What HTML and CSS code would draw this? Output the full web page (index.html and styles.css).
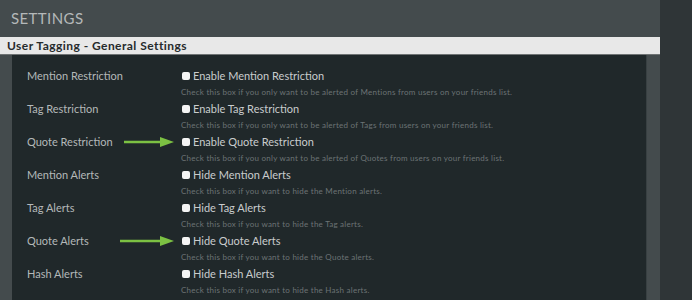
FILE: index.html
```html
<!DOCTYPE html>
<html lang="en">
<head>
    <meta charset="UTF-8">
    <title>Settings - User Tagging</title>
    <link rel="stylesheet" href="styles.css">
</head>
<body>
    <div class="panel">
        <header class="panel-header">
            <h1>Settings</h1>
        </header>

        <h2 class="section-title">User Tagging - General Settings</h2>

        <div class="section-body">
            <div class="setting-row">
                <div class="setting-label">Mention Restriction</div>
                <div class="setting-field">
                    <label class="check"><span class="box"></span>Enable Mention Restriction</label>
                    <p class="hint">Check this box if you only want to be alerted of Mentions from users on your friends list.</p>
                </div>
            </div>

            <div class="setting-row">
                <div class="setting-label">Tag Restriction</div>
                <div class="setting-field">
                    <label class="check"><span class="box"></span>Enable Tag Restriction</label>
                    <p class="hint">Check this box if you only want to be alerted of Tags from users on your friends list.</p>
                </div>
            </div>

            <div class="setting-row">
                <div class="setting-label">
                    Quote Restriction
                    <svg class="arrow" width="50" height="10" viewBox="0 0 50 10">
                        <line x1="0" y1="5" x2="40" y2="5" stroke="#7cc143" stroke-width="2.4" stroke-linecap="round"/>
                        <polygon points="36,0 50,5 36,10" fill="#7cc143"/>
                    </svg>
                </div>
                <div class="setting-field">
                    <label class="check"><span class="box"></span>Enable Quote Restriction</label>
                    <p class="hint">Check this box if you only want to be alerted of Quotes from users on your friends list.</p>
                </div>
            </div>

            <div class="setting-row">
                <div class="setting-label">Mention Alerts</div>
                <div class="setting-field">
                    <label class="check"><span class="box"></span>Hide Mention Alerts</label>
                    <p class="hint">Check this box if you want to hide the Mention alerts.</p>
                </div>
            </div>

            <div class="setting-row">
                <div class="setting-label">Tag Alerts</div>
                <div class="setting-field">
                    <label class="check"><span class="box"></span>Hide Tag Alerts</label>
                    <p class="hint">Check this box if you want to hide the Tag alerts.</p>
                </div>
            </div>

            <div class="setting-row">
                <div class="setting-label">
                    Quote Alerts
                    <svg class="arrow" width="54" height="10" viewBox="0 0 54 10">
                        <line x1="0" y1="5" x2="44" y2="5" stroke="#7cc143" stroke-width="2.4" stroke-linecap="round"/>
                        <polygon points="40,0 54,5 40,10" fill="#7cc143"/>
                    </svg>
                </div>
                <div class="setting-field">
                    <label class="check"><span class="box"></span>Hide Quote Alerts</label>
                    <p class="hint">Check this box if you want to hide the Quote alerts.</p>
                </div>
            </div>

            <div class="setting-row">
                <div class="setting-label">Hash Alerts</div>
                <div class="setting-field">
                    <label class="check"><span class="box"></span>Hide Hash Alerts</label>
                    <p class="hint">Check this box if you want to hide the Hash alerts.</p>
                </div>
            </div>
        </div>
    </div>
</body>
</html>
```

FILE: styles.css
```css
:root {
    --outer: #2f3537;
    --panel: #444b4d;
    --dark: #20282a;
    --bar: #e8e8e8;
    --label: #b4b8b9;
    --text: #c9cccd;
    --hint: #6c7375;
}

* {
    margin: 0;
    padding: 0;
    box-sizing: border-box;
    font-family: 'Lato', 'Noto Sans', sans-serif;
}

body {
    background: var(--outer);
    min-height: 300px;
}

.panel {
    width: 660px;
    min-height: 300px;
    background: var(--panel);
}

.panel-header {
    height: 37px;
    padding: 9px 11px 0;
}

.panel-header h1 {
    font-size: 15px;
    font-weight: 400;
    text-transform: uppercase;
    letter-spacing: 0.4px;
    color: var(--label);
}

.section-title {
    height: 18px;
    padding: 0 7px;
    background: var(--bar);
    border-bottom: 1px solid #6f7374;
    font-size: 12px;
    font-weight: 700;
    line-height: 17px;
    letter-spacing: 0.45px;
    color: #262b2c;
}

.section-body {
    margin: 0 13px 0 12px;
    padding: 13px 0 0 15px;
    min-height: 245px;
    background: var(--dark);
    border-right: 1px solid #384042;
}

.setting-row {
    display: grid;
    grid-template-columns: 154px 1fr;
}

.setting-label {
    position: relative;
    font-size: 11px;
    line-height: 16px;
    color: var(--label);
}

.arrow {
    position: absolute;
    top: 3px;
    right: 7px;
}

.check {
    display: flex;
    align-items: center;
    font-size: 11px;
    line-height: 16px;
    color: var(--text);
}

.box {
    width: 8px;
    height: 8px;
    margin: 0 3px 0 1px;
    background: #f4f4f4;
    border-radius: 2px;
}

.hint {
    font-size: 8px;
    line-height: 17px;
    letter-spacing: 0.25px;
    color: var(--hint);
}
```
